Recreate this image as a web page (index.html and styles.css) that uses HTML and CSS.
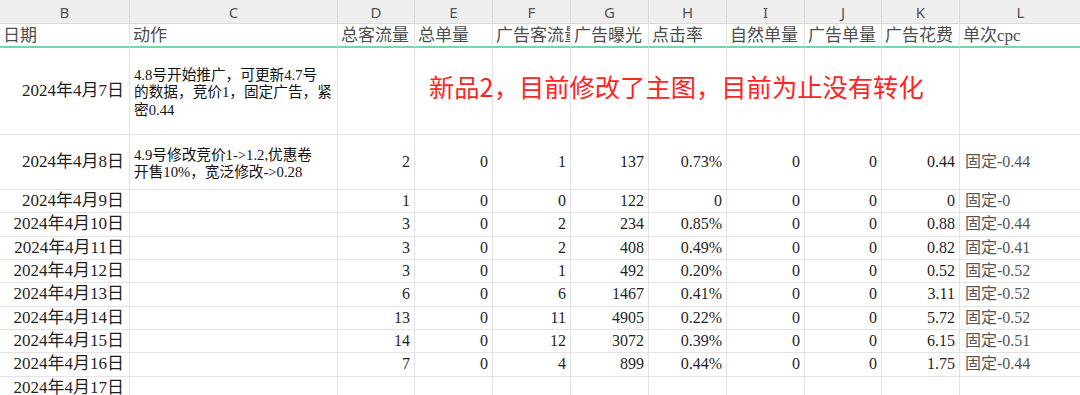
FILE: index.html
```html
<!DOCTYPE html>
<html lang="zh-CN">
<head>
<meta charset="utf-8">
<title>Sheet</title>
<link rel="stylesheet" href="styles.css">
</head>
<body>
<div class="sheet">
  <div class="cell col">B</div><div class="cell col">C</div><div class="cell col">D</div><div class="cell col">E</div><div class="cell col">F</div><div class="cell col">G</div><div class="cell col">H</div><div class="cell col">I</div><div class="cell col">J</div><div class="cell col">K</div><div class="cell col">L</div>

  <div class="cell hd">日期</div><div class="cell hd">动作</div><div class="cell hd">总客流量</div><div class="cell hd">总单量</div><div class="cell hd">广告客流量</div><div class="cell hd">广告曝光</div><div class="cell hd">点击率</div><div class="cell hd">自然单量</div><div class="cell hd">广告单量</div><div class="cell hd">广告花费</div><div class="cell hd">单次cpc</div>

  <div class="cell date">2024年4月7日</div><div class="cell note"><span>4.8号开始推广，可更新4.7号<br>的数据，竞价1，固定广告，紧<br>密0.44</span></div><div class="cell"></div><div class="cell"></div><div class="cell"></div><div class="cell"></div><div class="cell"></div><div class="cell"></div><div class="cell"></div><div class="cell"></div><div class="cell"></div>

  <div class="cell date">2024年4月8日</div><div class="cell note"><span>4.9号修改竞价1-&gt;1.2,优惠卷<br>开售10%，宽泛修改-&gt;0.28</span></div><div class="cell num">2</div><div class="cell num">0</div><div class="cell num">1</div><div class="cell num">137</div><div class="cell num">0.73%</div><div class="cell num">0</div><div class="cell num">0</div><div class="cell num">0.44</div><div class="cell cpc">固定-0.44</div>

  <div class="cell date">2024年4月9日</div><div class="cell"></div><div class="cell num">1</div><div class="cell num">0</div><div class="cell num">0</div><div class="cell num">122</div><div class="cell num">0</div><div class="cell num">0</div><div class="cell num">0</div><div class="cell num">0</div><div class="cell cpc">固定-0</div>

  <div class="cell date">2024年4月10日</div><div class="cell"></div><div class="cell num">3</div><div class="cell num">0</div><div class="cell num">2</div><div class="cell num">234</div><div class="cell num">0.85%</div><div class="cell num">0</div><div class="cell num">0</div><div class="cell num">0.88</div><div class="cell cpc">固定-0.44</div>

  <div class="cell date">2024年4月11日</div><div class="cell"></div><div class="cell num">3</div><div class="cell num">0</div><div class="cell num">2</div><div class="cell num">408</div><div class="cell num">0.49%</div><div class="cell num">0</div><div class="cell num">0</div><div class="cell num">0.82</div><div class="cell cpc">固定-0.41</div>

  <div class="cell date">2024年4月12日</div><div class="cell"></div><div class="cell num">3</div><div class="cell num">0</div><div class="cell num">1</div><div class="cell num">492</div><div class="cell num">0.20%</div><div class="cell num">0</div><div class="cell num">0</div><div class="cell num">0.52</div><div class="cell cpc">固定-0.52</div>

  <div class="cell date">2024年4月13日</div><div class="cell"></div><div class="cell num">6</div><div class="cell num">0</div><div class="cell num">6</div><div class="cell num">1467</div><div class="cell num">0.41%</div><div class="cell num">0</div><div class="cell num">0</div><div class="cell num">3.11</div><div class="cell cpc">固定-0.52</div>

  <div class="cell date">2024年4月14日</div><div class="cell"></div><div class="cell num">13</div><div class="cell num">0</div><div class="cell num">11</div><div class="cell num">4905</div><div class="cell num">0.22%</div><div class="cell num">0</div><div class="cell num">0</div><div class="cell num">5.72</div><div class="cell cpc">固定-0.52</div>

  <div class="cell date">2024年4月15日</div><div class="cell"></div><div class="cell num">14</div><div class="cell num">0</div><div class="cell num">12</div><div class="cell num">3072</div><div class="cell num">0.39%</div><div class="cell num">0</div><div class="cell num">0</div><div class="cell num">6.15</div><div class="cell cpc">固定-0.51</div>

  <div class="cell date">2024年4月16日</div><div class="cell"></div><div class="cell num">7</div><div class="cell num">0</div><div class="cell num">4</div><div class="cell num">899</div><div class="cell num">0.44%</div><div class="cell num">0</div><div class="cell num">0</div><div class="cell num">1.75</div><div class="cell cpc">固定-0.44</div>

  <div class="cell date">2024年4月17日</div><div class="cell"></div><div class="cell"></div><div class="cell"></div><div class="cell"></div><div class="cell"></div><div class="cell"></div><div class="cell"></div><div class="cell"></div><div class="cell"></div><div class="cell"></div>

  <div class="callout">新品2，目前修改了主图，目前为止没有转化</div>
</div>
</body>
</html>
```

FILE: styles.css
```css
html, body {
  margin: 0;
  padding: 0;
  background: #ffffff;
  overflow: hidden;
}

.sheet {
  position: relative;
  display: grid;
  grid-template-columns: 130px 208px 77px 78px 78px 78px 78px 78px 77px 78px 122px;
  grid-template-rows: 24px 24px 87px 55px repeat(10, 23.333px);
  width: 1080px;
  height: 395px;
  overflow: hidden;
  font-family: "Liberation Serif", "Noto Sans CJK SC", serif;
}

.cell {
  box-sizing: border-box;
  border-right: 1px solid #e3e3e3;
  border-bottom: 1px solid #e3e3e3;
  overflow: hidden;
  white-space: nowrap;
  display: flex;
  align-items: center;
  padding: 0 4px;
  font-size: 16px;
  line-height: 18px;
  color: #1f1f1f;
}

.col {
  background: #eeeeee;
  justify-content: center;
  font-family: "Noto Sans", "Liberation Sans", sans-serif;
  font-size: 15px;
  color: #555555;
  border-right-color: #dadada;
  border-bottom-color: #dadada;
}

.hd {
  border-bottom: 2px solid #7ad3ad;
  font-size: 17px;
  color: #4e4e4e;
  padding-left: 3px;
  padding-top: 1px;
}

.num {
  justify-content: flex-end;
}

.date {
  justify-content: flex-end;
  font-size: 17px;
  padding-right: 5px;
}

.note {
  font-size: 14.67px;
  line-height: 17.5px;
  color: #111111;
  padding-top: 4px;
}

.cpc {
  color: #555555;
  padding-left: 5px;
}

.callout {
  position: absolute;
  left: 429px;
  top: 74px;
  font-family: "Noto Sans CJK SC", sans-serif;
  font-size: 25.3px;
  line-height: 1;
  color: #ff2424;
  white-space: nowrap;
}
```
